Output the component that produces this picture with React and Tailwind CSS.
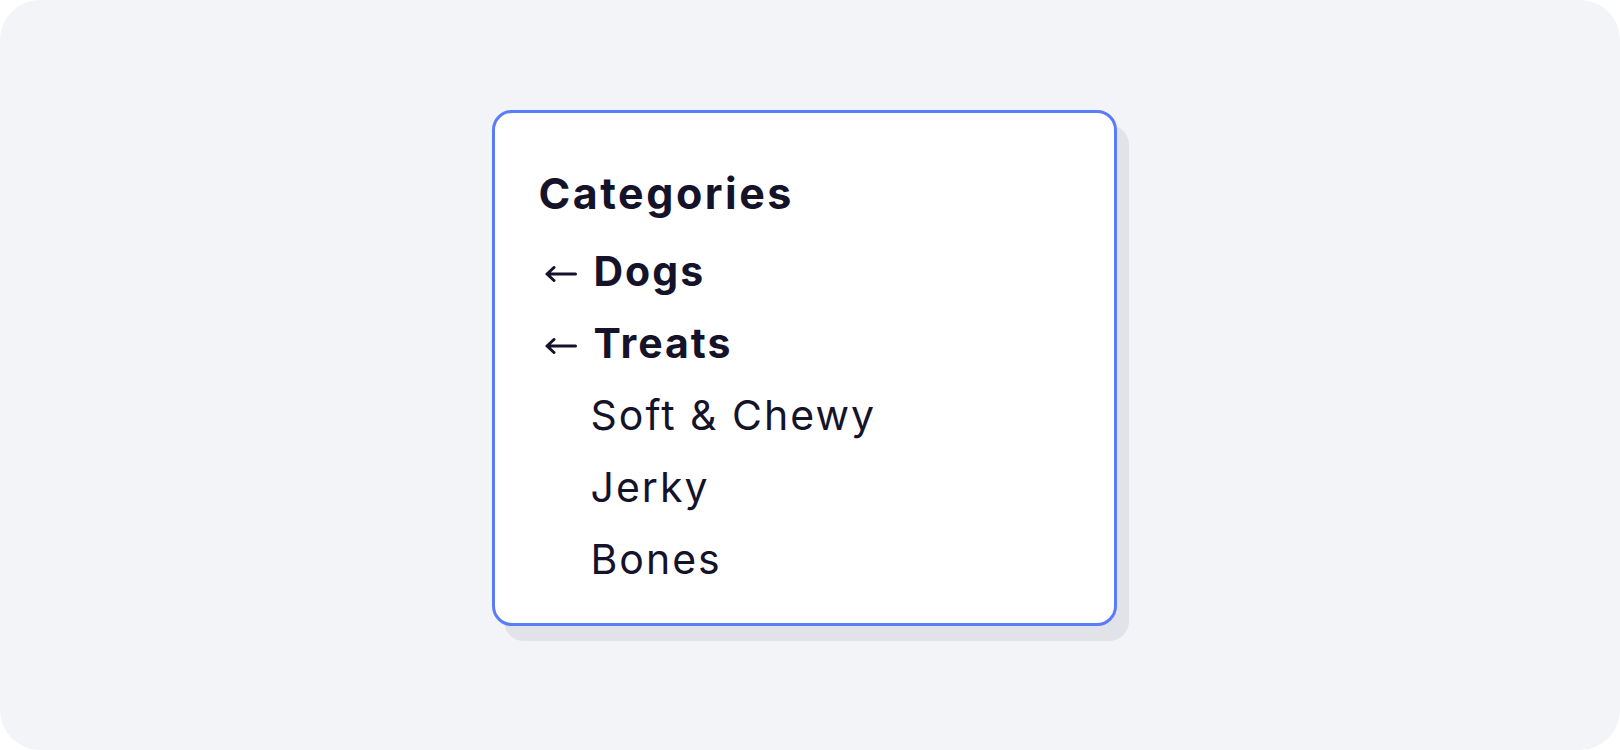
function BackArrow() {
  return (
    <svg
      width="32"
      height="16"
      viewBox="0 0 32 16"
      fill="none"
      stroke="currentColor"
      strokeWidth="3"
      strokeLinecap="round"
      strokeLinejoin="round"
      className="ml-[6px] mt-[6px] shrink-0"
    >
      <path d="M30.5 8H2M9 1.5L2 8l7 6.5" />
    </svg>
  );
}

export default function App() {
  const subs = ['Soft & Chewy', 'Jerky', 'Bones'];

  return (
    <div className="w-[1620px] h-[750px] bg-white">
      <div
        className="w-full h-full rounded-[40px] bg-[#f3f4f8] flex items-center justify-center"
        style={{ fontFamily: 'Inter, "Liberation Sans", sans-serif' }}
      >
        <div className="pr-3 pb-[14px]">
          <div className="w-[625px] bg-white border-[3px] border-[#5b7cfa] rounded-[20px] shadow-[12px_15px_0_0_#e2e3e8] pl-[44px] pt-[44px] pb-[28px] text-[#15132a] text-[41px] leading-[72px] tracking-[2px]">
            <h2 className="font-bold text-[43px] tracking-[2.5px] mb-[6px]">Categories</h2>
            <div className="flex items-center gap-[17px] font-bold">
              <BackArrow />
              <span>Dogs</span>
            </div>
            <div className="flex items-center gap-[17px] font-bold">
              <BackArrow />
              <span>Treats</span>
            </div>
            {subs.map((s) => (
              <div key={s} className="pl-[52px]">{s}</div>
            ))}
          </div>
        </div>
      </div>
    </div>
  );
}
